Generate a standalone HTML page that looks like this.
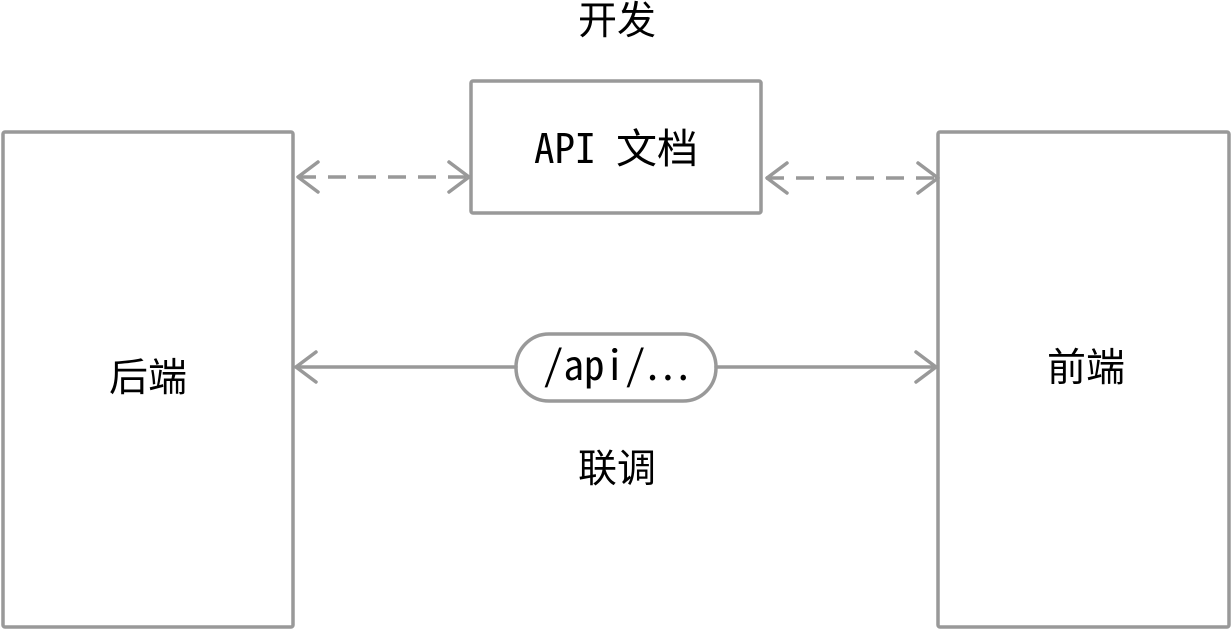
<!DOCTYPE html>
<html><head><meta charset="utf-8"><style>
html,body{margin:0;padding:0;background:#fff;width:1232px;height:630px;overflow:hidden}
svg{display:block}
.c{font-family:"Liberation Sans","Noto Sans CJK SC",sans-serif;font-size:39px;fill:#000}
.m{font-family:"Noto Sans Mono CJK SC","DejaVu Sans Mono","Noto Sans CJK SC",monospace;font-size:41px;fill:#000}
</style></head><body>
<svg width="1232" height="630" viewBox="0 0 1232 630" xmlns="http://www.w3.org/2000/svg">
<g fill="none" stroke="#999" stroke-width="3.5" stroke-linejoin="round" stroke-linecap="round">
<rect x="3" y="132" width="290" height="495" rx="2"/>
<rect x="938" y="132" width="291" height="495" rx="2"/>
<rect x="471" y="81" width="290" height="132" rx="2"/>
<rect x="516" y="334" width="200" height="67" rx="33"/>
<line x1="298" y1="177" x2="468" y2="177" stroke-dasharray="18,12" stroke-linecap="butt"/>
<line x1="766" y1="178" x2="936" y2="178" stroke-dasharray="18,12" stroke-linecap="butt"/>
<polyline points="318,162 298,177 318,192"/>
<polyline points="449,162 469,177 449,192"/>
<polyline points="787,163 767,178 787,193"/>
<polyline points="918,163 938,178 918,193"/>
<line x1="296" y1="367" x2="516" y2="367"/>
<line x1="716" y1="367" x2="936" y2="367"/>
<polyline points="316,352 296,367 316,382"/>
<polyline points="916,352 936,367 916,382"/>
</g>
<text class="c" x="617" y="34" text-anchor="middle">开发</text>
<text class="m" x="616" y="163" text-anchor="middle">API 文档</text>
<text class="m" x="616" y="380" text-anchor="middle">/api/…</text>
<text class="c" x="148" y="391" text-anchor="middle">后端</text>
<text class="c" x="1086" y="381" text-anchor="middle">前端</text>
<text class="c" x="617" y="482" text-anchor="middle">联调</text>
</svg>
</body></html>
